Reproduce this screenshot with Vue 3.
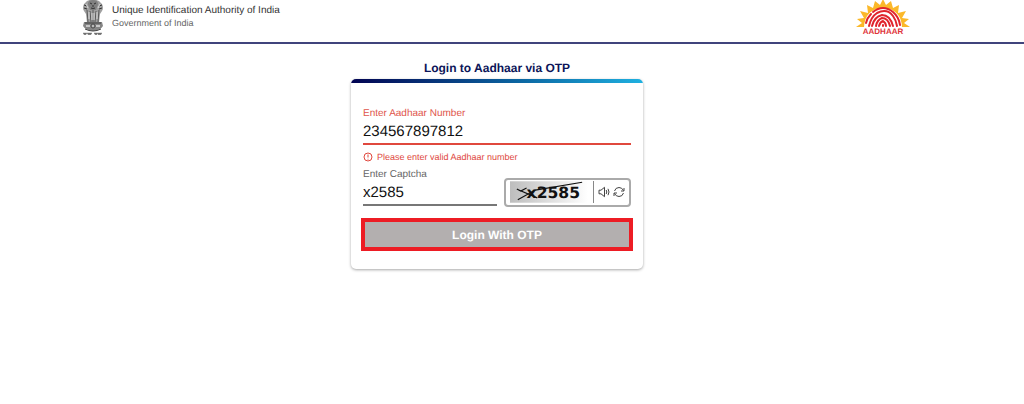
<template>
  <div class="page">
    <header class="header">
      <div class="brand">
        <svg class="emblem" viewBox="0 0 22 36" role="img" aria-label="State Emblem of India">
          <path d="M5 1 Q11 -2 17 1 L20 4 Q22 8 20 11 L18 14 17 23 H5 L4 14 2 11 Q0 8 2 4Z" fill="#a0a0a0" />
          <path d="M7 1 Q11 -1 15 1 Q17 4 15 7 L14 10 H8 L7 7 Q5 4 7 1Z" fill="#808080" />
          <path d="M8 3 L10 4 M12 4 L14 3 M10 6 H12 M9 8 Q11 9 13 8 M2 5 L5 6 M2 8 L5 9 M17 6 L20 5 M17 9 L20 8" stroke="#333" stroke-width="1" fill="none" />
          <path d="M5 10 L6 22 M8 11 L9 22 M11 10 V22 M14 11 L13 22 M17 10 L16 22" stroke="#5a5a5a" stroke-width="1" fill="none" />
          <path d="M4 4 L6 8 M18 4 L16 8 M7 12 V19 M10 13 V20 M12 13 V20 M15 12 V19" stroke="#d8d8d8" stroke-width="1" fill="none" />
          <path d="M2 22 H20 L21 26 Q19 30 11 31 Q3 30 1 26Z" fill="#858585" />
          <path d="M3 23 H19 M3 29 Q11 33 19 29" stroke="#404040" stroke-width="1" fill="none" />
          <circle cx="11" cy="26" r="2" fill="#bbb" stroke="#444" />
          <path d="M4 26 H8 M14 26 H18" stroke="#ddd" stroke-width="1.5" />
          <path d="M1 33.5 H10 M12 33.5 H20" stroke="#888" stroke-width="1.5" />
          <path d="M2 34 H4 M6 34 H9 M13 34 H15 M16 34 H19" stroke="#666" stroke-width="1.5" />
        </svg>
        <div class="brand-text">
          <div class="brand-name">Unique Identification Authority of India</div>
          <div class="brand-sub">Government of India</div>
        </div>
      </div>
      <svg class="aadhaar-logo" viewBox="0 0 56 36" role="img" aria-label="Aadhaar">
        <path
          d="M1 27 L7 23 L2 19 L9 18 L5 11 L13 13 L12 5 L18 8 L20 1 L25 5 L28 -1 L31 5 L36 1 L38 8 L44 5 L43 13 L51 11 L47 18 L54 19 L49 23 L55 27 H47 Q46 9 28 8 Q10 9 9 27Z"
          fill="#fbb829"
        />
        <g fill="none" stroke="#e0242c" stroke-width="2" stroke-linecap="round">
          <path d="M11 23 Q12 18 16 14 M18 12 Q28 4 38 12 Q44 17 45 25" />
          <path d="M14 26 Q16 17 22 13 Q32 8 38 16 Q41 20 42 26" />
          <path d="M17 26 Q19 17 27 15 Q35 15 38 26" />
          <path d="M21 26 Q22 20 27 18 Q33 18 35 26" />
          <path d="M24 26 Q25 22 28 21 Q31 23 31 26 M28 25 V26" />
        </g>
        <text class="logo-text" x="28" y="34" text-anchor="middle">AADHAAR</text>
      </svg>
    </header>

    <main class="main">
      <h1 class="title">Login to Aadhaar via OTP</h1>
      <form class="card" @submit.prevent>
        <div class="field invalid">
          <label for="aadhaar">Enter Aadhaar Number</label>
          <input id="aadhaar" v-model="aadhaar" type="text" autocomplete="off" aria-describedby="aadhaar-error" />
        </div>
        <div id="aadhaar-error" class="error">
          <svg class="error-icon" viewBox="0 0 10 10" aria-hidden="true">
            <circle cx="5" cy="5" r="4" />
            <path d="M5 2.5 V5.5 M5 6.8 V7.6" />
          </svg>
          <span>Please enter valid Aadhaar number</span>
        </div>

        <div class="captcha-row">
          <div class="field">
            <label for="captcha">Enter Captcha</label>
            <input id="captcha" v-model="captcha" type="text" autocomplete="off" />
          </div>
          <div class="captcha-box">
            <svg class="captcha-image" viewBox="0 0 80 22" role="img" aria-label="Captcha">
              <defs>
                <linearGradient id="captcha-bg">
                  <stop offset="0" stop-color="#bdbdbd" />
                  <stop offset="1" stop-color="#ffffff" />
                </linearGradient>
              </defs>
              <rect width="80" height="22" fill="url(#captcha-bg)" />
              <text class="captcha-text" x="17" y="17">x2585</text>
              <path d="M7 8 L11 10 L17 7 M9 9 L28 17 M8 19 L26 9 M26 9 L74 1" fill="none" stroke="#111" stroke-width="1.2" />
            </svg>
            <div class="captcha-actions">
              <button type="button" class="icon-btn" aria-label="Listen to captcha">
                <svg viewBox="0 0 12 12">
                  <path d="M1 4.2 H3 L6.5 1.3 V10.7 L3 7.8 H1Z M8.2 4 Q9.4 6 8.2 8 M10 2.8 Q12 6 10 9.2" />
                </svg>
              </button>
              <button type="button" class="icon-btn" aria-label="Refresh captcha">
                <svg viewBox="0 0 12 12">
                  <path d="M1.5 5 Q2.5 1.5 6 1.5 Q9 1.5 10.5 4.5 M11 2 V5 H8 M10.5 7 Q9.5 10.5 6 10.5 Q3 10.5 1.5 7.5 M1 10 V7 H4" />
                </svg>
              </button>
            </div>
          </div>
        </div>

        <button type="submit" class="login-btn">Login With OTP</button>
      </form>
    </main>
  </div>
</template>

<script setup>
import { ref } from 'vue'

const aadhaar = ref('234567897812')
const captcha = ref('x2585')
</script>

<style>
body {
  margin: 0;
  background: #ffffff;
}
</style>

<style scoped>
.page {
  padding-bottom: 24px;
  font-family: 'Liberation Sans', Arial, sans-serif;
  color: #111111;
  text-rendering: geometricPrecision;
}

.header {
  display: flex;
  justify-content: space-between;
  align-items: flex-start;
  padding: 0 11% 6px 8%;
  border-bottom: 2px solid #40447c;
}

.brand {
  display: flex;
  gap: 8px;
}

.emblem {
  width: 22px;
  height: 36px;
}

.brand-text {
  padding-top: 5px;
}

.brand-name {
  font-size: 10px;
  line-height: 12px;
  color: #333333;
}

.brand-sub {
  font-size: 9px;
  line-height: 12px;
  color: #666666;
}

.aadhaar-logo {
  width: 56px;
  height: 36px;
}

.logo-text {
  font-size: 8px;
  font-weight: bold;
  fill: #e0343a;
}

.main {
  display: flex;
  flex-direction: column;
  align-items: center;
  padding: 16px 30px 0 0;
}

.title {
  margin: 0 0 3px;
  font-size: 12px;
  line-height: 16px;
  color: #0c1558;
}

.card {
  position: relative;
  box-sizing: border-box;
  width: 100%;
  max-width: 292px;
  padding: 28px 12px 18px;
  border-radius: 5px;
  overflow: hidden;
  box-shadow: 0 1px 3px rgba(0, 0, 0, 0.35);
}

.card::before {
  content: '';
  position: absolute;
  top: 0;
  left: 0;
  right: 0;
  height: 4px;
  background: linear-gradient(90deg, #020452, #0c6aa5 60%, #1fb0e0);
}

.field label {
  display: block;
  font-size: 10px;
  line-height: 14px;
  color: #666666;
}

.field input {
  display: block;
  box-sizing: border-box;
  width: 100%;
  height: 24px;
  padding: 0 0 2px;
  border: none;
  border-bottom: 2px solid #777777;
  background: transparent;
  font-family: inherit;
  font-size: 15px;
  color: #111111;
  text-rendering: inherit;
  outline: none;
}

.field.invalid label {
  color: #e0554b;
}

.field.invalid input {
  border-bottom-color: #e0483e;
}

.error {
  display: flex;
  align-items: center;
  gap: 4px;
  margin-top: 6px;
  font-size: 9px;
  line-height: 12px;
  color: #e0483e;
}

.error-icon {
  width: 10px;
  height: 10px;
  fill: none;
  stroke: #e0483e;
}

.captcha-row {
  display: flex;
  gap: 7px;
  margin-top: 5px;
}

.captcha-row .field {
  flex: 1;
  min-width: 0;
}

.captcha-box {
  display: flex;
  align-items: center;
  box-sizing: border-box;
  width: 127px;
  height: 29px;
  margin-top: 10px;
  padding: 0 4px 2px;
  border: 2px solid #aaaaaa;
  border-radius: 4px;
}

.captcha-image {
  width: 80px;
  height: 22px;
}

.captcha-text {
  font-family: 'DejaVu Sans', sans-serif;
  font-size: 16px;
  font-weight: bold;
  fill: #111111;
}

.captcha-actions {
  display: flex;
  align-items: center;
  gap: 3px;
  height: 22px;
  margin-left: 5px;
  padding-left: 4px;
  border-left: 1px solid #888888;
}

.icon-btn {
  width: 12px;
  height: 12px;
  padding: 0;
  border: none;
  background: none;
  cursor: pointer;
}

.icon-btn svg {
  display: block;
  width: 12px;
  height: 12px;
  fill: none;
  stroke: #444444;
}

.login-btn {
  display: block;
  box-sizing: border-box;
  width: calc(100% + 4px);
  height: 33px;
  margin: 11px -2px 0;
  padding: 0;
  border: 4px solid #ed1c24;
  background: #b3afaf;
  font-family: inherit;
  font-size: 12px;
  font-weight: bold;
  color: #ffffff;
  text-rendering: inherit;
  cursor: pointer;
}
</style>
